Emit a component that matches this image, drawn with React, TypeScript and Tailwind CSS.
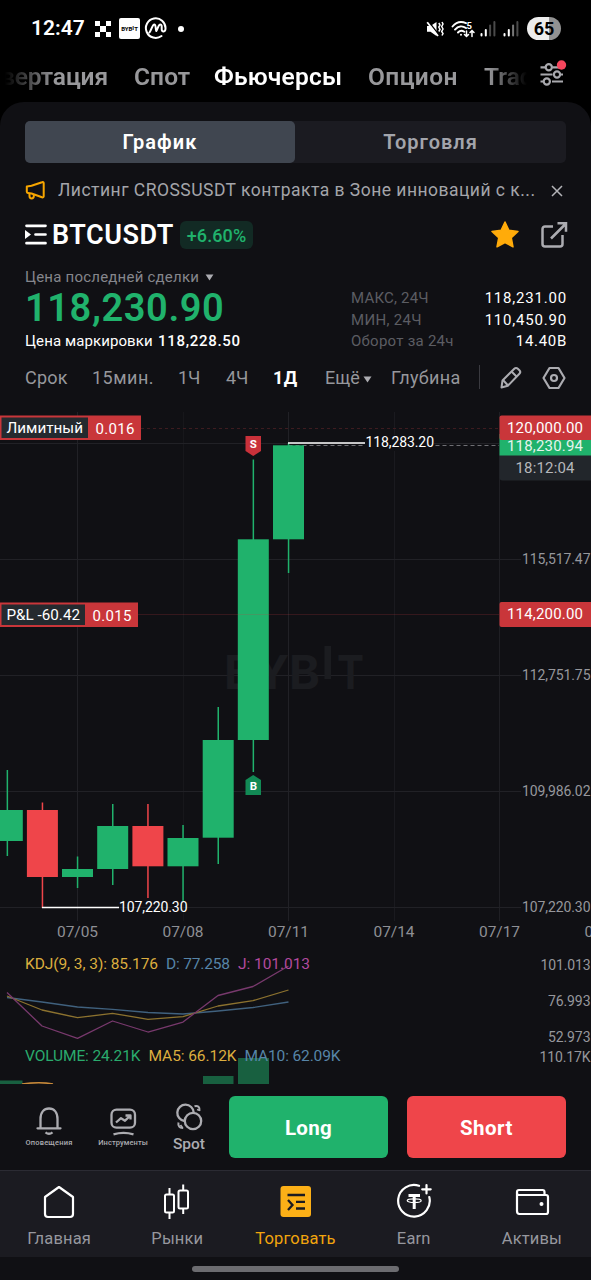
import React from 'react';

const GREEN = '#20b26c';
const RED = '#ef454a';
const TAG_RED = '#c9363a';

interface Candle {
    x: number;
    high: number;
    top: number;
    bottom: number;
    low: number;
    up: boolean;
}

const candles: Candle[] = [
    { x: 7.3, high: 770, top: 810, bottom: 841, low: 856, up: true },
    { x: 42.4, high: 802.5, top: 810, bottom: 877, low: 908, up: false },
    { x: 77.5, high: 856.5, top: 869, bottom: 877, low: 888, up: true },
    { x: 112.7, high: 804, top: 826, bottom: 869, low: 885, up: true },
    { x: 147.9, high: 804, top: 826, bottom: 866.3, low: 898, up: false },
    { x: 183, high: 825, top: 838, bottom: 866.3, low: 901, up: true },
    { x: 218.2, high: 707, top: 740, bottom: 837.7, low: 864, up: true },
    { x: 253.3, high: 459.5, top: 539.3, bottom: 740, low: 772, up: true },
    { x: 288.5, high: 443, top: 445.3, bottom: 539.3, low: 573, up: true },
];

const priceTicks = [
    { y: 559.5, label: '115,517.47' },
    { y: 675.5, label: '112,751.75' },
    { y: 791.5, label: '109,986.02' },
    { y: 907.5, label: '107,220.30' },
];

const dateTicks = [
    { x: 77.5, label: '07/05', line: '#212126' },
    { x: 183, label: '07/08', line: '#17171b' },
    { x: 288.5, label: '07/11', line: '#212126' },
    { x: 394, label: '07/14', line: '#1a1a1f' },
    { x: 499.5, label: '07/17', line: '#1f1f24' },
];

function StatusBar() {
    return (
        <div className="flex h-[57px] items-center justify-between pl-[31px] pr-[30px]">
            <div className="flex items-center text-white">
                <span className="w-[64px] whitespace-nowrap text-[21px] font-semibold leading-none tracking-[0px]">12:47</span>
                {/* Checker logo */}
                <svg width="16" height="16" viewBox="0 0 15 15" fill="#fff" shapeRendering="crispEdges">
                    <path d="M0 0h5v5H0zM10 0h5v5h-5zM5 5h5v5H5zM0 10h5v5H0zM10 10h5v5h-5z" />
                </svg>
                <span className="ml-2 flex h-[21px] w-[21px] items-center justify-center rounded-[2px] bg-white text-[6px] font-bold tracking-[0px] text-black">BYB<span className="relative -top-px">I</span>T</span>
                <svg className="ml-1" width="23" height="23" viewBox="0 0 23 23" fill="none" stroke="#fff" strokeWidth="2" strokeLinecap="round" strokeLinejoin="round">
                    <path d="M17.500 19A9.800 9.800 0 1 1 21.500 11.500c0 3.600-3.800 4-3.800.8 0-3 .3-4.800-1.400-4.800-1.800 0-2.600 4.200-4 6.500-1-2.300-.2-6.500-2-6.500-1.900 0-2.600 5-4.800 8" strokeWidth="2" />
                </svg>
                <span className="ml-[11px] h-1.5 w-1.5 rounded-full bg-white" />
            </div>
            <div className="flex items-center">
                <svg width="18" height="18" viewBox="0 0 18 18" fill="none" stroke="#fff" strokeWidth="1.500">
                    <path d="M1 6h3.500L10.500 2v14L4.500 11.800H1z" fill="#fff" stroke="none" />
                    <path d="M2.500 1.500l10 13" stroke="#000" strokeWidth="1.500" />
                    <path d="M1.200 2.200L12 16" strokeWidth="1.800" />
                    <path d="M12.800 3l1.200 2-1.200 2 1.200 2.500-1.200 2M16 2l1 2-1.300 2.500L17 9l-1.300 2.500 1.300 2-1 2" strokeWidth="1.500" />
                </svg>
                <svg className="ml-[7px]" width="25" height="18" viewBox="0 0 25 18" fill="none" stroke="#fff" strokeWidth="1.900" strokeLinecap="round">
                    <path d="M1.500 6.500C5.500 1.800 10.500 1.200 15 3.200M4 9.600c3.200-3.600 7.500-4 11-1.500M7 12.500c1.800-2 4.200-2.200 6.300-.8" />
                    <circle cx="10" cy="14.800" r="1" fill="#fff" stroke="none" />
                    <path d="M15.500 11v5.500m-2-2l2 2 2-2M21 16.500V10.500m-2 2l2-2 2 2" strokeWidth="1.500" />
                    <text x="15.500" y="8.500" fill="#fff" stroke="none" fontSize="9.500" fontWeight="700" fontFamily="Roboto, sans-serif">5</text>
                </svg>
                {[0, 1].map((i) => (
                    <svg key={i} className={i === 0 ? 'ml-1' : 'ml-[7px]'} width="16" height="17" viewBox="0 0 16 17">
                        <rect x="0.500" y="13" width="2" height="3.500" rx="1" fill="#fff" />
                        <rect x="4.800" y="9" width="2" height="7.500" rx="1" fill="#fff" />
                        <rect x="9.100" y="4.500" width="2" height="12" rx="1" fill={i === 0 ? '#4a4a4a' : '#777'} />
                        <rect x="13.400" y="1" width="2" height="15.500" rx="1" fill="#4a4a4a" />
                    </svg>
                ))}
                <span className="ml-2 flex h-[23px] w-[34px] items-center justify-center rounded-full bg-[linear-gradient(90deg,#ededed_65%,#929292_65%)] text-[18px] font-bold leading-none text-black">65</span>
            </div>
        </div>
    );
}

function TopTabs() {
    return (
        <div className="flex h-[45px] items-start justify-between">
            <div className="flex w-[528px] overflow-hidden whitespace-nowrap pt-1 text-[24.500px] font-semibold leading-[31px] text-[#98989b] [mask-image:linear-gradient(90deg,transparent_5px,#000_55px,#000_488px,transparent_527px)]">
                <span className="flex w-[108px] shrink-0 justify-end tracking-[-0.1px]">вертация</span>
                <span className="ml-[26px] w-[80px] shrink-0 tracking-[0.1px]">Спот</span>
                <span className="w-[154px] shrink-0 tracking-[0.2px] text-white">Фьючерсы</span>
                <span className="w-[116px] shrink-0 tracking-[0.4px]">Опцион</span>
                <span className="shrink-0">Trad</span>
            </div>
            <svg className="mr-[22px] mt-[2px]" width="30" height="28" viewBox="0 0 30 28" fill="none" stroke="#a9a9ae" strokeWidth="2.200">
                <path d="M1.500 8.300h4.500M13.500 8.300H20M1.500 15.500h12M21.500 15.500H24M1.500 22.500h2.500M13 22.500H24" />
                <circle cx="9.800" cy="8.300" r="3.100" />
                <circle cx="18" cy="15.500" r="3.100" />
                <circle cx="7.800" cy="22.500" r="3.100" />
                <circle cx="22.500" cy="6" r="4.700" fill="#f6465d" stroke="none" />
            </svg>
        </div>
    );
}

function SymbolHeader() {
    return (
        <>
            <div className="mx-[25px] mt-[19px] flex h-[42px] rounded-[5px] bg-[#1b1b21] text-[20px] font-semibold leading-[42px]">
                <div className="w-[270px] rounded-[5px] bg-[#404650] text-center tracking-[1.1px] text-white">График</div>
                <div className="flex-1 text-center tracking-[1px] text-[#a3a5ac]">Торговля</div>
            </div>

            {/* Announcement */}
            <div className="mx-[25px] mt-[13px] flex h-7 items-center">
                <svg className="shrink-0" width="21" height="22" viewBox="0 0 21 22" fill="none" stroke="#f7a600" strokeWidth="2" strokeLinejoin="round">
                    <path d="M2 7.500l4.500-.7L17 3.200c1-.4 1.700 0 1.700 1v13c0 1-.7 1.400-1.700 1.100L6.500 14.500 3 14c-.8-.1-1.200-.5-1.200-1.300V7.500z" />
                    <path d="M4.500 14.500v2.800c0 2.800 4.300 2.800 4.300 0v-2" />
                </svg>
                <span className="ml-[12px] w-[478px] shrink-0 whitespace-nowrap text-[17.500px] tracking-[0.480px] text-[#a4a5aa]">Листинг CROSSUSDT контракта в Зоне инноваций с к...</span>
                <svg className="ml-auto mr-[3px] mt-px shrink-0" width="12" height="12" viewBox="0 0 12 12" stroke="#b4b4b8" strokeWidth="1.500">
                    <path d="M1 1l10 10M11 1L1 11" />
                </svg>
            </div>

            <div className="mx-[25px] mt-[11px] flex h-[40px] items-center">
                <svg width="22" height="22" viewBox="0 0 22 22" fill="none" stroke="#fff" strokeWidth="2.700">
                    <path d="M1.500 1.800h19M10.500 10.500h10M1.500 19.200h19" strokeLinecap="round" />
                    <path d="M0 6l6 4.500-6 4.500z" fill="#fff" stroke="none" />
                </svg>
                <span className="ml-[5px] w-[128px] whitespace-nowrap text-[27px] font-semibold leading-none tracking-[0.500px] text-white">BTCUSDT</span>
                <span className="flex h-[28px] w-[73px] items-center justify-center rounded-[6px] bg-[#122a24] text-[18px] font-medium tracking-[0.1px] text-[#20b26c]">+6.60%</span>
                <svg className="ml-auto" width="30" height="30" viewBox="0 0 30 30" fill="#ffab0a" stroke="#ffab0a" strokeWidth="1.500" strokeLinejoin="round">
                    <path d="M15 2l3.900 8.300 9.100 1.200-6.700 6.300 1.700 9L15 22.500l-8 4.300 1.700-9L2 11.500l9.100-1.200z" />
                </svg>
                <svg className="ml-[20px] mr-[-2px]" width="28" height="28" viewBox="0 0 28 28" fill="none" stroke="#acacb1" strokeWidth="2.500">
                    <path d="M13 5.500H5A2.500 2.500 0 0 0 2.500 8v15A2.500 2.500 0 0 0 5 25.500h15a2.500 2.500 0 0 0 2.500-2.500v-9" />
                    <path d="M17.500 2.300H26v8.500M25.500 3L11 17.500" />
                </svg>
            </div>

            <div className="mx-[25px] mt-[12px] flex h-[86px] justify-between">
                <div className="whitespace-nowrap">
                    <div className="flex h-5 items-center text-[15px] tracking-[0.220px] text-[#85868c]">
                        Цена последней сделки
                        <svg className="ml-1.5" width="9" height="7" viewBox="0 0 10 8" fill="#acacb1">
                            <path d="M0.500 0.500h9L5 7.500z" />
                        </svg>
                    </div>
                    <div className="h-[42px] text-[38px] font-semibold leading-[42px] tracking-[0.600px] text-[#20b26c]">118,230.90</div>
                    <div className="mt-0.5 flex h-5 text-[15px] leading-5 text-white">
                        <span className="w-[133px] tracking-[0.1px]">Цена маркировки</span>
                        <span className="font-medium tracking-[0.700px]">118,228.50</span>
                    </div>
                </div>
                <div className="mr-[-1px] mt-[21px] w-[217px] text-[15px] leading-[21.500px] text-white">
                    <div className="flex justify-between"><span className="ml-px tracking-[0.200px] text-[#5c5d63]">МАКС, 24Ч</span><span className="tracking-[0.800px]">118,231.00</span></div>
                    <div className="flex justify-between"><span className="ml-px tracking-[0.300px] text-[#5c5d63]">МИН, 24Ч</span><span className="tracking-[0.800px]">110,450.90</span></div>
                    <div className="flex justify-between"><span className="ml-px tracking-[0.250px] text-[#5c5d63]">Оборот за 24ч</span><span className="tracking-[0.700px]">14.40B</span></div>
                </div>
            </div>
        </>
    );
}

function Timeframes() {
    return (
        <div className="ml-[25px] mr-[24px] mt-[10px] flex h-[28px] items-center whitespace-nowrap text-[18px] text-[#96979c]">
            <span className="w-[67px] tracking-[0.200px]">Срок</span>
            <span className="w-[86px] tracking-[0.500px]">15мин.</span>
            <span className="w-[48px]">1Ч</span>
            <span className="w-[47px]">4Ч</span>
            <span className="w-[52px] font-bold tracking-[0.500px] text-white">1Д</span>
            <span className="flex w-[66px] items-center">
                Ещё
                <svg className="ml-[3px] mt-1" width="9" height="7" viewBox="0 0 9 7" fill="#acacb1"><path d="M0.500 0.500h8l-4 6z" /></svg>
            </span>
            <span className="w-[88px] tracking-[0.350px]">Глубина</span>
            <span className="h-[24px] w-px bg-[#3a3a40]" />
            <svg className="ml-[20px] mt-0.5" width="22" height="24" viewBox="0 0 22 24" fill="none" stroke="#acacb1" strokeWidth="2" strokeLinejoin="round">
                <path d="M1.500 21.500l1-7L14.300 2.700c1-1 2.500-1 3.500 0l1.600 1.600c1 1 1 2.500 0 3.500L7.800 19.800z" />
                <path d="M3 14l5 5.500M11.500 5.500l5 5" />
            </svg>
            <svg className="ml-auto mt-0.5" width="25" height="24" viewBox="0 0 25 24" fill="none" stroke="#acacb1" strokeWidth="2.200" strokeLinejoin="round">
                <path d="M7.500 2h9L22.500 12l-6 10h-9l-6-10z" />
                <circle cx="12" cy="12" r="3" />
            </svg>
        </div>
    );
}

interface OrderTagProps {
    y: number;
    label: string;
    qty: string;
    split: number;
    width: number;
}

function OrderTag({ y, label, qty, split, width }: OrderTagProps) {
    return (
        <g fontSize="15" fill="#fff">
            <rect x="-2" y={y} width={width + 2} height="24.500" fill={TAG_RED} />
            <rect x="1.500" y={y + 2} width={split - 2} height="20.500" fill="#252a2f" />
            <text x="6.500" y={y + 17} textLength={split - 12} lengthAdjust="spacingAndGlyphs">{label}</text>
            <text x={split + 7} y={y + 18} textLength="39">{qty}</text>
        </g>
    );
}

function Chart() {
    return (
        <svg className="block" width="591" height="686" viewBox="0 398 591 686" fontFamily="Roboto, sans-serif">
            {dateTicks.map((t) => <path key={t.x} d={`M${Math.floor(t.x) + 0.5} 412V921`} stroke={t.line} />)}
            <g stroke="#212126">
                <path d="M0 443.500H500" />
                {priceTicks.map((t) => <path key={t.y} d={`M0 ${t.y}H521`} />)}
            </g>

            {/* Watermark */}
            <g fill="#1b1c20" fontFamily="Inter, sans-serif" fontSize="46" fontWeight="700">
                <text x="224" y="688.500" textLength="96" lengthAdjust="spacingAndGlyphs">BYB</text>
                <rect x="324.500" y="646" width="6.500" height="33" />
                <text x="337" y="688.500" textLength="27" lengthAdjust="spacingAndGlyphs">T</text>
            </g>

            <path d="M288.500 445.500H499" stroke="#6f6f74" strokeDasharray="4 3" strokeWidth="1" />

            {candles.map((c) => (
                <g key={c.x} fill={c.up ? GREEN : RED}>
                    <rect x={c.x - 0.7} y={c.high} width="1.500" height={c.low - c.high} />
                    <rect x={c.x - 15.5} y={c.top} width="31" height={c.bottom - c.top} />
                </g>
            ))}

            <path d="M141 428.500H499" stroke="#3e1c20" strokeDasharray="3 3" />
            <path d="M137 614.500H499" stroke="#cb3a40" strokeOpacity="0.200" />
            <OrderTag y={415.500} label="Лимитный" qty="0.016" split={88.500} width={141} />
            <OrderTag y={602.500} label="P&L -60.42" qty="0.015" split={85.500} width={138} />

            {/* Trade markers */}
            <path d="M245.500 436h15.500v15l-7.800 5-7.700-5z" fill="#c9313a" />
            <path d="M245.500 795h15.500v-15l-7.800-5-7.700 5z" fill="#128a55" />
            <g fill="#fff" fontSize="11.500" fontWeight="700" textAnchor="middle">
                <text x="253.300" y="448">S</text>
                <text x="253.500" y="789.500">B</text>
            </g>

            {/* High / low callouts */}
            <path d="M288 443H365M42 907.500H119" stroke="#fff" strokeWidth="1.500" />
            <g fill="#fff" fontSize="14">
                <rect x="365" y="435" width="69" height="16" fill="#101014" />
                <text x="365.500" y="447" textLength="68.500">118,283.20</text>
                <text x="119" y="911.500" textLength="68.500">107,220.30</text>
            </g>

            {/* Price scale */}
            <g fill="#96979c" fontSize="14">
                {priceTicks.map((t) => <text key={t.label} x="522" y={t.y + 4} textLength="68.500">{t.label}</text>)}
                <text x="540.500" y="970" textLength="50">101.013</text>
                <text x="548" y="1006" textLength="42.500">76.993</text>
                <text x="548" y="1042" textLength="42.500">52.973</text>
                <text x="539.500" y="1062" textLength="51">110.17K</text>
            </g>
            <path d="M499.500 455h92v25.500h-89q-3 0-3-3z" fill="#22262b" />
            <rect x="499.500" y="434" width="92" height="21.500" fill={GREEN} />
            <g fontSize="15">
                <text x="507" y="450.500" fill="#e6f5ed" textLength="76">118,230.94</text>
                <rect x="499.500" y="415.500" width="94" height="24.500" rx="2" fill={TAG_RED} />
                <text x="507" y="433" fill="#fff" textLength="76">120,000.00</text>
                <rect x="499.500" y="602" width="94" height="25" rx="2" fill={TAG_RED} />
                <text x="507" y="619.300" fill="#fff" textLength="76">114,200.00</text>
                <text x="515.500" y="473" fill="#b6b7bb" textLength="59">18:12:04</text>
            </g>

            <g fill="#8e8f94" fontSize="15.500" textAnchor="middle">
                {dateTicks.map((t) => <text key={t.label} x={t.x} y="937" textLength="41">{t.label}</text>)}
                <text x="584.500" y="937" textAnchor="start">0</text>
            </g>

            {/* KDJ */}
            <g fill="none" strokeWidth="1.300" strokeLinejoin="round">
                <path d="M7 997.500L42 1002 77.500 1007 112.500 1009.300 148 1012.500 183 1014 218 1011 253 1007.500 288.500 1002" stroke="#40617e" />
                <path d="M7 996L42 1010 77.500 1017.700 112.500 1013.300 148 1019.300 183 1016.700 218 1006 253 1000.700 288.500 990" stroke="#8c722f" />
                <path d="M7 992.500L42 1026 77.500 1038.300 112.500 1021 148 1032 183 1022 218 995.500 253 986.500 288.500 966" stroke="#78396d" />
            </g>

            {/* Volume */}
            <g fill="#186040">
                <rect x="-8" y="1080.500" width="30.500" height="4" />
                <rect x="203" y="1076" width="30.500" height="8" />
                <rect x="238" y="1058" width="31" height="26" />
            </g>
            <path d="M22 1084Q40 1081.500 53 1084" stroke="#c98a3a" strokeWidth="1.500" fill="none" />

            <g fontSize="15.500">
                <text x="25" y="969" fill="#dcae3f" textLength="133">KDJ(9, 3, 3): 85.176</text>
                <text x="166" y="969" fill="#5785a8" textLength="64">D: 77.258</text>
                <text x="238" y="969" fill="#b34a9e" textLength="72">J: 101.013</text>
                <text x="25" y="1061" fill="#2aab6d" textLength="115.500">VOLUME: 24.21K</text>
                <text x="148.500" y="1061" fill="#dcae3f" textLength="88">MA5: 66.12K</text>
                <text x="244.500" y="1061" fill="#5785a8" textLength="96">MA10: 62.09K</text>
            </g>
        </svg>
    );
}

function ActionBar() {
    return (
        <div className="flex h-[86px] items-start pl-[19px] pr-[25px] pt-3 text-[#acacb1]">
            <div className="flex w-[60px] flex-col items-center pt-2.5">
                <svg width="28" height="30" viewBox="0 0 28 30" fill="none" stroke="currentColor" strokeWidth="2.300" strokeLinejoin="round">
                    <path d="M2.500 22.300h23M5.500 22V13c0-7 3.500-10.500 8.500-10.500s8.500 3.500 8.500 10.500v9" strokeLinecap="round" />
                    <path d="M10.500 26.300q3.500 3 7 0" />
                </svg>
                <span className="mt-0.5 whitespace-nowrap text-[7.500px] font-medium leading-[9px] tracking-[0.200px]">Оповещения</span>
            </div>
            <div className="ml-[14px] flex w-[60px] flex-col items-center pt-2.5">
                <svg width="28" height="30" viewBox="0 0 28 30" fill="none" stroke="currentColor" strokeWidth="2.300" strokeLinejoin="round">
                    <rect x="2.500" y="3.700" width="23.500" height="18" rx="5" />
                    <path d="M7 16.500l5-4.300 4 2.500 5-4.700M16.500 9.500h5v4" />
                    <path d="M4.500 28.300q10-3 20 0" />
                </svg>
                <span className="mt-0.5 whitespace-nowrap text-[7.500px] font-medium leading-[9px] tracking-[0.080px]">Инструменты</span>
            </div>
            <div className="ml-[6px] flex w-[60px] flex-col items-center pt-[7px]">
                <svg width="28" height="28" viewBox="0 0 28 28" fill="none" stroke="currentColor" strokeWidth="2.300">
                    <circle cx="18" cy="18" r="8.200" />
                    <path d="M9.500 18A8.200 8.200 0 1 1 18.700 9.500" />
                    <path d="M19.500 3.200c3.300-1 5.800 1.200 4.800 4.600M3.500 19.500c-.8 3.500 1.200 5.700 4.500 5.200" strokeWidth="2" />
                    <path d="M22 6.500l3.200 1M5.500 22l2.300 3.500" strokeWidth="1.800" />
                </svg>
                <span className="mt-[3px] text-[15.500px] font-medium leading-5">Spot</span>
            </div>
            <button className="ml-[10px] h-[62px] w-[159px] rounded-[6px] bg-[#20b26c] pt-0.5 text-[20.500px] font-bold tracking-[0.300px] text-white">Long</button>
            <button className="ml-auto h-[62px] w-[159px] rounded-[6px] bg-[#ef454a] pt-0.5 text-[20.500px] font-bold tracking-[0.500px] text-white">Short</button>
        </div>
    );
}

const navItems = [
    {
        label: 'Главная',
        icon: <path d="M3 14L17 4l14 10v17q0 3-3 3H6q-3 0-3-3z" strokeWidth="2.200" strokeLinejoin="round" />,
    },
    {
        label: 'Рынки',
        icon: (
            <g strokeWidth="2">
                <rect x="5" y="11.500" width="9" height="18" rx="1.500" />
                <rect x="18.500" y="7.500" width="9.500" height="18" rx="1.500" />
                <path d="M9.500 5v6.500M9.500 29.500V36M23.200 1.500v6M23.200 25.500V31" />
            </g>
        ),
    },
    {
        label: 'Торговать',
        active: true,
        icon: (
            <g>
                <rect x="1.500" y="3" width="30.500" height="31" rx="3" fill="#fcb017" stroke="none" />
                <path d="M8.500 12h17.500M17 18.800h9M17 25.500h9M9 17l4.500 5-4.500 5" stroke="#1b1b21" strokeWidth="2.300" />
            </g>
        ),
    },
    {
        label: 'Earn',
        icon: (
            <g strokeWidth="2.200" strokeLinecap="round">
                <path d="M22 2.800A15.800 15.800 0 1 0 32.300 14" />
                <path d="M29.500 2v8.500M25.200 6.300h8.500" />
                <path d="M11.500 12.500h11.500M17.200 12.500V26" strokeWidth="3" strokeLinecap="butt" />
                <ellipse cx="17.200" cy="17.700" rx="7" ry="1.800" strokeWidth="1.200" />
            </g>
        ),
    },
    {
        label: 'Активы',
        icon: (
            <g strokeWidth="2.200" strokeLinejoin="round">
                <path d="M29.500 12V9q0-2-2-2H4q-2 0-2 2v19q0 3 2.500 3h26.500q2 0 2-2V14q0-2-2-2H4q-2 0-2-2" />
                <circle cx="26.500" cy="21" r="2" fill="#fff" stroke="none" />
            </g>
        ),
    },
];

function BottomNav() {
    return (
        <nav className="flex h-[87px] justify-between border-t border-[#2b2b33] bg-[#1b1b21]">
            {navItems.map((item) => (
                <div key={item.label} className="flex w-1/5 flex-col items-center pt-3">
                    <svg width="36" height="38" viewBox="-1 0 36 38" fill="none" stroke="#fff">{item.icon}</svg>
                    <span className={`mt-[7px] whitespace-nowrap text-[16.500px] leading-[22px] tracking-[0.150px] ${item.active ? 'text-[#f2a50d]' : 'text-[#96979e]'}`}>{item.label}</span>
                </div>
            ))}
        </nav>
    );
}

export default function App() {
    return (
        <div className="flex h-[1280px] w-[591px] flex-col overflow-hidden bg-black font-['Roboto','Noto_Sans',sans-serif]">
            <StatusBar />
            <TopTabs />
            <main className="flex flex-1 flex-col rounded-t-[24px] bg-[#101014]">
                <SymbolHeader />
                <Timeframes />
                <div className="mt-auto">
                    <Chart />
                    <ActionBar />
                    <BottomNav />
                    <div className="flex h-[23px] items-center justify-center">
                        <div className="h-1.5 w-[207px] rounded-full bg-[#6c6c70]" />
                    </div>
                </div>
            </main>
        </div>
    );
}
